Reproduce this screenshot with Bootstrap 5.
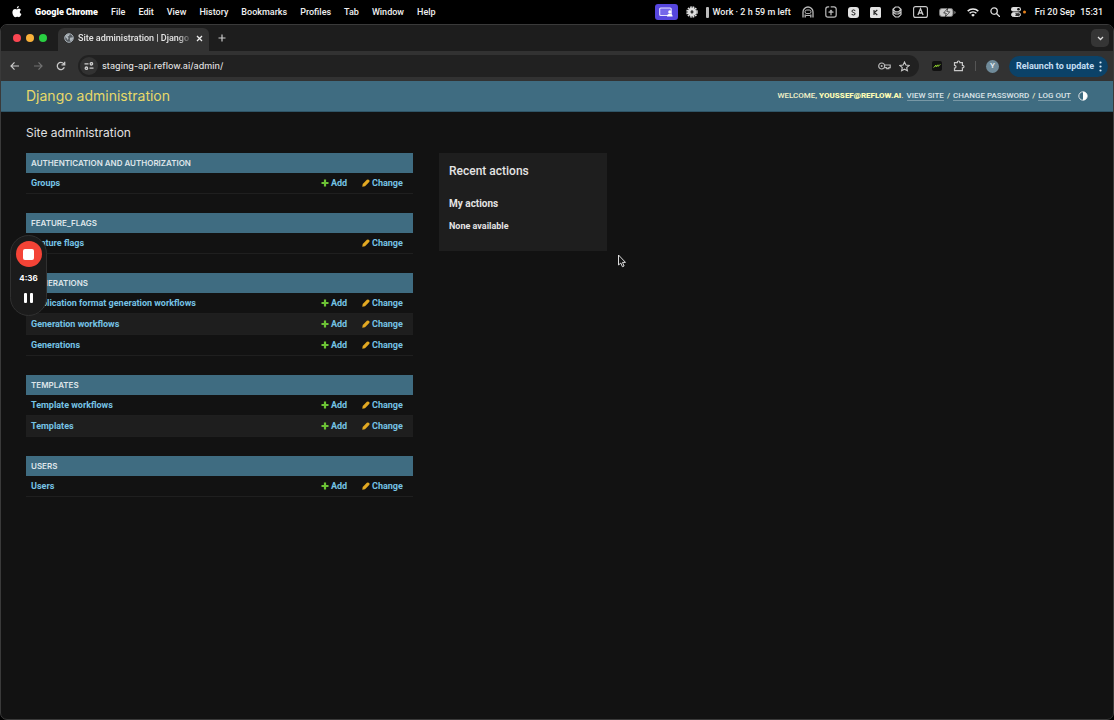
<!DOCTYPE html>
<html lang="en">
<head>
<meta charset="utf-8">
<meta name="viewport" content="width=device-width, initial-scale=1">
<title>Site administration | Django site admin</title>
<link href="https://cdn.jsdelivr.net/npm/bootstrap@5.3.0/dist/css/bootstrap.min.css" rel="stylesheet">
<style>
  body { background: #000; color: #e4e4e4; font-family: Roboto, "Liberation Sans", sans-serif; font-size: 9px; line-height: 12px; }
  svg { display: block; flex: none; }
  button { background: none; border: 0; padding: 0; color: inherit; font: inherit; }

  .menubar { height: 24px; padding: 0 11px 0 12px; font-weight: 500; white-space: nowrap; color: #f0f0f0; }
  .menus { gap: 13px; }
  .menus .app-name { font-weight: 900; color: #fff; }
  .tray { gap: 11px; }
  .share-group { gap: 8px; }
  .sharing { width: 23px; height: 16px; border-radius: 3px; background: #5646de; }
  .timer { gap: 4px; }
  .clock-group { gap: 8px; }
  .clock { gap: 5px; }

  .browser { min-height: calc(100vh - 24px); border: 1px solid #3a3a3a; border-radius: 7px; background: #121212; overflow: hidden; }
  .tabstrip { height: 26px; background: #1d1d1d; padding: 0 4px 0 12px; }
  .lights { gap: 5px; margin-right: 11px; }
  .light { width: 8px; height: 8px; border-radius: 50%; }
  .page-tab { width: 151px; height: 23px; padding: 0 6px 3px 6px; gap: 4px; border-radius: 6px 6px 0 0; background: #323232; font-weight: 500; margin-right: 9px; }
  .tab-title { overflow: hidden; white-space: nowrap; -webkit-mask-image: linear-gradient(90deg, #000 88%, transparent); mask-image: linear-gradient(90deg, #000 88%, transparent); }
  .tab-search { width: 18px; height: 18px; border-radius: 5px; background: #353535; }

  .toolbar { height: 30px; background: #323232; padding: 0 5px 0 8px; }
  .nav-icons { gap: 11px; margin-right: 11px; }
  .omnibox { height: 22px; border-radius: 11px; background: #212121; padding: 0 9px 0 2px; gap: 4px; margin-right: 12px; }
  .site-info { width: 18px; height: 18px; border-radius: 50%; background: #323232; }
  .omnibox input { flex: 1; min-width: 0; background: none; border: 0; padding: 0; color: #dedede; font-family: Inter, sans-serif; font-weight: 500; font-size: 9px; outline: 0; }
  .ext { gap: 10px; }
  .avatar { width: 13px; height: 13px; border-radius: 50%; background: #6f8a99; color: #dfe8ee; font-size: 8px; font-weight: 700; }
  .relaunch { height: 21px; border-radius: 11px; background: #0b4268; color: #c4def3; font-weight: 700; padding: 0 6px 0 7px; gap: 5px; white-space: nowrap; }
  .split { width: 1px; height: 10px; background: #555; }

  .site-header { min-height: 31px; background: #3f6c81; padding: 0 25px; border-bottom: 1px solid #2f5567; }
  .site-header h1 { font-family: Inter, sans-serif; font-size: 14px; line-height: 18px; font-weight: 400; color: #e8d968; margin: 0; }
  .user-tools { font-size: 8px; gap: 3px; color: #f2f2c8; font-weight: 500; }
  .user-tools a { color: #dbe4e8; text-decoration: none; border-bottom: 1px solid #7898a6; line-height: 9px; }
  .user-tools strong { color: #fbfbb4; font-weight: 900; }

  .content { padding: 12px 25px 20px; }
  .content h2 { font-family: Inter, sans-serif; font-size: 12px; line-height: 18px; font-weight: 400; margin: 0 0 11px; color: #e0e0e0; }
  .dashboard { max-width: 581px; gap: 26px; }
  .module { width: 100%; margin-bottom: 19px; border-collapse: separate; border-spacing: 0; }
  .module caption { caption-side: top; background: #3f6c81; color: #dfe6ea; height: 20px; line-height: 20px; padding: 0 5px; font-family: Inter, sans-serif; font-size: 8px; font-weight: 600; text-transform: uppercase; }
  .module a { color: #76c3e6; text-decoration: none; }
  .module th, .module td { height: 21px; padding: 0; font-weight: 700; border-bottom: 1px solid #1f1f1f; }
  .module th { padding-left: 5px; }
  .module tr:nth-child(even) > * { background: #1e1e1e; }
  .add-col { width: 41px; }
  .change-col { width: 51px; }
  .act { display: flex; align-items: center; gap: 2px; }

  .recent { width: 168px; min-height: 98px; padding: 9px 10px; background: #1e1e1e; }
  .recent h3 { font-size: 12px; line-height: 18px; font-weight: 500; margin: 0 0 18px; }
  .recent h4 { font-size: 10px; line-height: 12px; font-weight: 700; margin: 0 0 10px; }
  .recent p { margin: 0; font-weight: 700; }

  .recorder { position: absolute; left: 10px; top: 235px; width: 37px; height: 81px; border: 1px solid #303030; border-radius: 19px; background: #1b1b1b; padding-top: 5px; font-family: Inter, sans-serif; font-size: 8px; font-weight: 700; color: #fff; }
  .stop { width: 26px; height: 26px; border-radius: 50%; background: #f44336; }
  .recorder output { margin: 5px 0 9px; line-height: 12px; }
  .pointer { position: absolute; left: 617px; top: 254px; }
</style>
</head>
<body>
<svg width="0" height="0" class="position-absolute" aria-hidden="true">
  <symbol id="plus" viewBox="0 0 8 8"><path d="M4 .5v7M.5 4h7" stroke="#6cc335" stroke-width="2.2"/></symbol>
  <symbol id="pencil" viewBox="0 0 9 9"><path d="M.3 8.7.8 5.6 5.5.9Q6.6 0 7.5.8L8.2 1.5Q9 2.4 8.1 3.5L3.4 8.2Z" fill="#e3a922"/></symbol>
</svg>

<header class="menubar d-flex justify-content-between align-items-center">
  <nav class="menus d-flex align-items-center" aria-label="Menu bar">
    <button aria-label="Apple menu"><svg width="10" height="12" viewBox="0 0 10 12" fill="#fff"><path d="M6.8 0C6.9 1.3 5.9 2.5 4.8 2.5 4.7 1.3 5.7.2 6.8 0ZM8.9 4C7.2 5 7.5 7.4 9.4 8.1 8.8 9.7 7.9 11.2 6.9 11.2 6.2 11.2 5.9 10.8 5.1 10.8 4.3 10.8 3.9 11.2 3.3 11.2 2 11.2.4 8.5.4 6.3.4 4 1.8 2.9 3.1 2.9 3.9 2.9 4.6 3.4 5 3.4 5.5 3.4 6.2 2.8 7.1 2.8 7.9 2.8 8.5 3.3 8.9 4Z"/></svg></button>
    <button class="app-name">Google Chrome</button>
    <button>File</button><button>Edit</button><button>View</button><button>History</button><button>Bookmarks</button><button>Profiles</button><button>Tab</button><button>Window</button><button>Help</button>
  </nav>
  <div class="tray d-flex align-items-center">
    <div class="share-group d-flex align-items-center">
      <button class="sharing d-flex align-items-center justify-content-center" aria-label="Screen sharing"><svg width="14" height="10" viewBox="0 0 14 10"><rect x=".7" y="1" width="11.5" height="7.5" rx="1" fill="#7567ea" stroke="#e5e1ff" stroke-width="1.1"/><circle cx="10.8" cy="4.9" r="1.6" fill="#fff"/><path d="M8 9.5Q8 6.8 10.8 6.8T13.6 9.5Z" fill="#fff"/></svg></button>
      <svg width="12" height="12" viewBox="0 0 12 12" fill="none"><circle cx="6" cy="6" r="5" stroke="#ddd" stroke-width="1.5" stroke-dasharray="1.8 .82"/><circle cx="6" cy="6" r="2.9" stroke="#ddd" stroke-width="3"/><circle cx="6" cy="6" r="1.2" fill="#333"/></svg>
      <div class="timer d-flex align-items-center"><svg width="3" height="11"><rect width="3" height="11" rx="1" fill="#bbb"/></svg><span>Work · 2 h 59 m left</span></div>
    </div>
    <svg width="12" height="12" viewBox="0 0 12 12" fill="none" stroke="#bbb"><path d="M1 11.5V6a5 5 0 0 1 10 0v5.5M3.2 11.5V8.6M8.8 11.5V8.6" stroke-width="1.3"/><rect x="3" y="4" width="6" height="3.6" rx="1.8"/><path d="M4 9.5h4"/></svg>
    <svg width="12" height="12" viewBox="0 0 12 12" fill="none" stroke="#bbb" stroke-width="1.2"><path d="M4.2.8H3A2.2 2.2 0 0 0 .8 3v6A2.2 2.2 0 0 0 3 11.2h6A2.2 2.2 0 0 0 11.2 9V3A2.2 2.2 0 0 0 9 .8H5.7M6 9.2V4.6M3.5 6.2h5"/><path d="m4.2 5.6 1.8-2 1.8 2Z" fill="#bbb" stroke="none"/></svg>
    <svg width="11" height="11" viewBox="0 0 11 11"><rect width="11" height="11" rx="3" fill="#e2e2e2"/><path d="M7.3 3.7Q5.5 2.2 4.2 3.4T5.5 5.5 6.9 7.5 3.6 7.4" fill="none" stroke="#222" stroke-width="1"/></svg>
    <svg width="11" height="11" viewBox="0 0 11 11"><rect width="11" height="11" rx="1.5" fill="#e2e2e2"/><path d="M4 3v5M7.3 3 4.3 5.5 7.3 8" fill="none" stroke="#222" stroke-width="1.1"/></svg>
    <svg width="10" height="12" viewBox="0 0 10 12" fill="none" stroke="#ccc" stroke-width="1.2"><path d="M1 3.2 3.4 1h3.2L9 3.2 6.6 5.8H3.4ZM.8 5.8 3.4 8h3.2l2.6-2.2M1 3.2V8.6L3.4 11h3.2L9 8.6V3.2"/></svg>
    <svg width="15" height="12" viewBox="0 0 15 12" fill="none" stroke="#ccc"><rect x=".6" y=".6" width="13.8" height="10.8" rx="2" stroke-width="1.1"/><path d="M4.9 9 7.5 2.8 10.1 9M5.8 7h3.4" stroke-width="1.3"/></svg>
    <svg width="17" height="9" viewBox="0 0 17 9"><rect x=".5" y=".5" width="13.5" height="8" rx="2.4" fill="#ccc" stroke="#777"/><path d="M15.3 3v3q1.3-.4 1.3-1.5T15.3 3Z" fill="#888"/><path d="M8.8.2 4.7 5h2.6l-1 3.8 4.4-5H7.8Z" fill="#fff" stroke="#222" stroke-width=".8"/></svg>
    <svg width="12" height="9" viewBox="0 0 12 9" fill="none" stroke="#eee" stroke-width="1.5"><path d="M.7 3.1a7.6 7.6 0 0 1 10.6 0M2.6 5.3a4.9 4.9 0 0 1 6.8 0"/><path d="M6 8.8 4.2 6.9a2.6 2.6 0 0 1 3.6 0Z" fill="#eee" stroke="none"/></svg>
    <svg width="10" height="10" viewBox="0 0 10 10" fill="none" stroke="#ddd" stroke-width="1.3"><circle cx="4.1" cy="4.1" r="3.2"/><path d="m6.5 6.5 3 3" stroke-linecap="round"/></svg>
    <div class="clock-group d-flex align-items-center">
      <svg width="16" height="10" viewBox="0 0 16 10"><rect width="10" height="4.6" rx="2.3" fill="#ddd"/><circle cx="7.5" cy="2.3" r="1.3" fill="#111"/><rect x=".5" y="5.7" width="9" height="3.8" rx="1.9" fill="#333" stroke="#ddd"/><circle cx="2.7" cy="7.6" r="2" fill="#ddd"/><circle cx="13.5" cy="5" r="1.5" fill="#e4811d"/></svg>
      <div class="clock d-flex"><span>Fri 20 Sep</span><span>15:31</span></div>
    </div>
  </div>
</header>

<div class="browser">
  <div class="tabstrip d-flex align-items-center">
    <div class="lights d-flex"><button class="light" style="background:#fa4652" aria-label="Close window"></button><button class="light" style="background:#f9b13a" aria-label="Minimise window"></button><button class="light" style="background:#29cf42" aria-label="Zoom window"></button></div>
    <div class="page-tab d-flex align-items-center align-self-end">
      <svg width="10" height="10" viewBox="0 0 10 10"><circle cx="5" cy="5" r="4.3" fill="#555b60" stroke="#a9b1b8"/><path d="M1 3.8 3.3 1.2 5.8 1 5 2.9 3.5 3.6 4.6 5 3.8 7.2 2.8 5.5ZM6 4.7l2.8-.5.3 1.8L6.8 8.6 5.8 7Z" fill="#aeb6bc"/></svg>
      <span class="tab-title flex-grow-1">Site administration | Django s</span>
      <button aria-label="Close tab"><svg width="7" height="7" viewBox="0 0 7 7" stroke="#eee" stroke-width="1.3"><path d="m1 1 5 5M6 1 1 6"/></svg></button>
    </div>
    <button aria-label="New tab"><svg width="8" height="8" viewBox="0 0 8 8" stroke="#ccc" stroke-width="1.2"><path d="M4 .5v7M.5 4h7"/></svg></button>
    <button class="tab-search ms-auto d-flex align-items-center justify-content-center" aria-label="Search tabs"><svg width="7" height="5" viewBox="0 0 7 5" fill="none" stroke="#ddd" stroke-width="1.3"><path d="m1 1 2.5 2.5L6 1"/></svg></button>
  </div>

  <div class="toolbar d-flex align-items-center">
    <div class="nav-icons d-flex align-items-center">
      <button aria-label="Back"><svg width="12" height="10" viewBox="0 0 12 10" fill="none" stroke="#c8c8c8" stroke-width="1.2"><path d="M10 5H2M5.5 1.4 2 5l3.5 3.6"/></svg></button>
      <button aria-label="Forward"><svg width="12" height="10" viewBox="0 0 12 10" fill="none" stroke="#717171" stroke-width="1.2"><path d="M2 5h8M6.5 1.4 10 5 6.5 8.6"/></svg></button>
      <button aria-label="Reload"><svg width="12" height="10" viewBox="0 0 12 10" fill="none" stroke="#c8c8c8" stroke-width="1.3"><path d="M9.3 6.2A3.6 3.6 0 1 1 8.7 2.7L9.5 3.7M9.7.7v3.2H6.5"/></svg></button>
    </div>
    <div class="omnibox d-flex align-items-center flex-grow-1">
      <button class="site-info d-flex align-items-center justify-content-center" aria-label="Site information"><svg width="10" height="8" viewBox="0 0 10 8" fill="none" stroke="#d0d0d0" stroke-width="1.3"><path d="M.5 1.8h4M5.5 6.2h4"/><circle cx="7.4" cy="1.8" r="1.2"/><circle cx="2.4" cy="6.2" r="1.2"/></svg></button>
      <input type="text" aria-label="Address" value="staging-api.reflow.ai/admin/">
      <button class="me-1" aria-label="Passwords"><svg width="13" height="8" viewBox="0 0 13 8" fill="none" stroke="#b9b9b9" stroke-width="1.2"><circle cx="3.7" cy="4" r="3"/><circle cx="3.7" cy="4" r="1" fill="#b9b9b9" stroke="none"/><path d="M6.5 3h5.7v2.7h-1.4v1H8.7v-1H6.4"/></svg></button>
      <button aria-label="Bookmark"><svg width="11" height="11" viewBox="0 0 11 11" fill="none" stroke="#c8c8c8" stroke-width="1.1"><path d="m5.5 1 1.4 3 3.3.4-2.5 2.2.7 3.2-2.9-1.6-2.9 1.6.7-3.2L.8 4.4 4.1 4Z"/></svg></button>
    </div>
    <div class="ext d-flex align-items-center">
      <button aria-label="Extension"><svg width="12" height="12" viewBox="0 0 12 12"><rect x="1" y="1" width="10" height="10" rx="2" fill="#111"/><path d="m2.7 7.6 2.3-2.6v1.8l2.1-2v1.7l2.2-2.2" fill="none" stroke="#8ccc2f" stroke-width="1"/></svg></button>
      <button aria-label="Extensions"><svg width="12" height="12" viewBox="0 0 12 12" fill="none" stroke="#c8c8c8" stroke-width="1.2"><path d="M1.5 2.7h2.8Q4.3 1 5.6 1T6.9 2.7h2.5v2.6q1.6 0 1.6 1.3T9.4 7.9v2.8H1.5V8.2q1.5 0 1.5-1.4T1.5 5.3Z"/></svg></button>
      <span class="split"></span>
      <button class="avatar d-flex align-items-center justify-content-center" aria-label="Profile Y">Y</button>
      <button class="relaunch d-flex align-items-center">Relaunch to update <svg width="3" height="11" viewBox="0 0 3 11" fill="#d5e8f7"><circle cx="1.5" cy="1.5" r="1.1"/><circle cx="1.5" cy="5.5" r="1.1"/><circle cx="1.5" cy="9.5" r="1.1"/></svg></button>
    </div>
  </div>

  <div class="site-header d-flex align-items-center justify-content-between">
    <h1>Django administration</h1>
    <div class="user-tools d-flex align-items-center">
      <span>WELCOME, <strong>YOUSSEF@REFLOW.AI</strong>.</span>
      <a href="#">VIEW SITE</a><span>/</span><a href="#">CHANGE PASSWORD</a><span>/</span><a href="#">LOG OUT</a>
      <button class="ms-1" aria-label="Toggle theme"><svg width="10" height="10" viewBox="0 0 10 10"><circle cx="5" cy="5" r="4.2" fill="none" stroke="#e8edf0" stroke-width=".9"/><path d="M5 .8a4.2 4.2 0 0 1 0 8.4Z" fill="#fff"/></svg></button>
    </div>
  </div>

  <main class="content">
    <h2>Site administration</h2>
    <div class="dashboard d-flex align-items-start">
      <div class="flex-grow-1">
        <table class="module">
          <caption>Authentication and Authorization</caption>
          <tr><th scope="row"><a href="#">Groups</a></th><td class="add-col"><a class="act" href="#"><svg width="8" height="8"><use href="#plus"/></svg>Add</a></td><td class="change-col"><a class="act" href="#"><svg width="8" height="8"><use href="#pencil"/></svg>Change</a></td></tr>
        </table>
        <table class="module">
          <caption>Feature_Flags</caption>
          <tr><th scope="row"><a href="#">Feature flags</a></th><td class="add-col"></td><td class="change-col"><a class="act" href="#"><svg width="8" height="8"><use href="#pencil"/></svg>Change</a></td></tr>
        </table>
        <table class="module">
          <caption>Generations</caption>
          <tr><th scope="row"><a href="#">Application format generation workflows</a></th><td class="add-col"><a class="act" href="#"><svg width="8" height="8"><use href="#plus"/></svg>Add</a></td><td class="change-col"><a class="act" href="#"><svg width="8" height="8"><use href="#pencil"/></svg>Change</a></td></tr>
          <tr><th scope="row"><a href="#">Generation workflows</a></th><td class="add-col"><a class="act" href="#"><svg width="8" height="8"><use href="#plus"/></svg>Add</a></td><td class="change-col"><a class="act" href="#"><svg width="8" height="8"><use href="#pencil"/></svg>Change</a></td></tr>
          <tr><th scope="row"><a href="#">Generations</a></th><td class="add-col"><a class="act" href="#"><svg width="8" height="8"><use href="#plus"/></svg>Add</a></td><td class="change-col"><a class="act" href="#"><svg width="8" height="8"><use href="#pencil"/></svg>Change</a></td></tr>
        </table>
        <table class="module">
          <caption>Templates</caption>
          <tr><th scope="row"><a href="#">Template workflows</a></th><td class="add-col"><a class="act" href="#"><svg width="8" height="8"><use href="#plus"/></svg>Add</a></td><td class="change-col"><a class="act" href="#"><svg width="8" height="8"><use href="#pencil"/></svg>Change</a></td></tr>
          <tr><th scope="row"><a href="#">Templates</a></th><td class="add-col"><a class="act" href="#"><svg width="8" height="8"><use href="#plus"/></svg>Add</a></td><td class="change-col"><a class="act" href="#"><svg width="8" height="8"><use href="#pencil"/></svg>Change</a></td></tr>
        </table>
        <table class="module">
          <caption>Users</caption>
          <tr><th scope="row"><a href="#">Users</a></th><td class="add-col"><a class="act" href="#"><svg width="8" height="8"><use href="#plus"/></svg>Add</a></td><td class="change-col"><a class="act" href="#"><svg width="8" height="8"><use href="#pencil"/></svg>Change</a></td></tr>
        </table>
      </div>
      <aside class="recent flex-shrink-0">
        <h3>Recent actions</h3>
        <h4>My actions</h4>
        <p>None available</p>
      </aside>
    </div>
  </main>
</div>

<div class="recorder d-flex flex-column align-items-center">
  <button class="stop d-flex align-items-center justify-content-center" aria-label="Stop recording"><svg width="11" height="11"><rect width="11" height="11" rx="2" fill="#fff"/></svg></button>
  <output>4:36</output>
  <button aria-label="Pause recording"><svg width="9" height="10" fill="#fff"><rect width="3" height="10" rx="1"/><rect x="6" width="3" height="10" rx="1"/></svg></button>
</div>
<svg class="pointer" width="10" height="14" viewBox="0 0 10 14"><path d="M1.5 1v10l2.3-2 1.6 3.7 1.7-.7-1.6-3.6h3Z" fill="#151515" stroke="#ddd" stroke-width="1"/></svg>
<script src="https://cdn.jsdelivr.net/npm/bootstrap@5.3.0/dist/js/bootstrap.bundle.min.js"></script>
</body>
</html>
